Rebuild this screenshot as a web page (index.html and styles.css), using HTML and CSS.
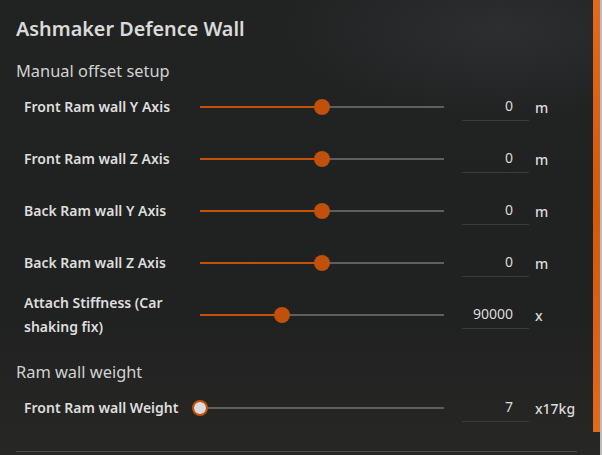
FILE: index.html
```html
<html lang="en">
<head>
    <meta charset="UTF-8">
    <title>Ashmaker Defence Wall</title>
    <link rel="stylesheet" href="styles.css">
</head>
<body>
    <div class="panel">
        <h1>Ashmaker Defence Wall</h1>

        <!-- Offsets -->
        <h2>Manual offset setup</h2>
        <div class="row">
            <div class="label">Front Ram wall Y Axis</div>
            <div class="slider"><div class="fill" style="width: 50%"></div><div class="thumb" style="left: 50%"></div></div>
            <div class="value">0</div>
            <div class="unit">m</div>
        </div>
        <div class="row">
            <div class="label">Front Ram wall Z Axis</div>
            <div class="slider"><div class="fill" style="width: 50%"></div><div class="thumb" style="left: 50%"></div></div>
            <div class="value">0</div>
            <div class="unit">m</div>
        </div>
        <div class="row">
            <div class="label">Back Ram wall Y Axis</div>
            <div class="slider"><div class="fill" style="width: 50%"></div><div class="thumb" style="left: 50%"></div></div>
            <div class="value">0</div>
            <div class="unit">m</div>
        </div>
        <div class="row">
            <div class="label">Back Ram wall Z Axis</div>
            <div class="slider"><div class="fill" style="width: 50%"></div><div class="thumb" style="left: 50%"></div></div>
            <div class="value">0</div>
            <div class="unit">m</div>
        </div>
        <div class="row">
            <div class="label">Attach Stiffness (Car shaking fix)</div>
            <div class="slider"><div class="fill" style="width: 33.6%"></div><div class="thumb" style="left: 33.6%"></div></div>
            <div class="value">90000</div>
            <div class="unit">x</div>
        </div>

        <!-- Weight -->
        <h2 class="second">Ram wall weight</h2>
        <div class="row">
            <div class="label">Front Ram wall Weight</div>
            <div class="slider"><div class="thumb empty" style="left: 0%"></div></div>
            <div class="value">7</div>
            <div class="unit">x17kg</div>
        </div>

        <div class="divider"></div>
    </div>

    <div class="scrollbar"></div>
    <div class="edge"></div>
</body>
</html>
```

FILE: styles.css
```css
/* General */
body {
    margin: 0;
    font-family: 'Noto Sans', sans-serif;
    color: #d6d6d6;
    background: radial-gradient(ellipse 220px 90px at 500px 30px, #2d2e30, rgba(45, 46, 48, 0)),
                linear-gradient(to bottom, #212222 0%, #202121 70%, #272725 100%);
    height: 455px;
    overflow: hidden;
}

.panel {
    padding: 16px 25px 0 16px;
}

h1 {
    margin: 0;
    font-size: 19.8px;
    font-weight: 600;
    line-height: 26px;
    color: #dadada;
}

h2 {
    margin: 18px 0 0 0;
    font-size: 16.4px;
    font-weight: 400;
    line-height: 21px;
    color: #d2d2d2;
}

h2.second {
    margin-top: 20px;
}

/* Rows */
.row {
    display: flex;
    align-items: center;
    height: 52px;
    padding-left: 8px;
}

.label {
    width: 176px;
    font-size: 14px;
    font-weight: 600;
    line-height: 24px;
    color: #dedede;
}

.slider {
    position: relative;
    width: 244px;
    height: 2px;
    background-color: #5f5f5f;
}

.fill {
    height: 2px;
    background-color: #c4500a;
}

.thumb {
    position: absolute;
    top: -7px;
    width: 16px;
    height: 16px;
    margin-left: -8px;
    border-radius: 50%;
    background-color: #c0500a;
}

.thumb.empty {
    box-sizing: border-box;
    border: 2px solid #c4500a;
    background-color: #dcdcdc;
}

.value {
    box-sizing: border-box;
    width: 67px;
    height: 28px;
    margin-left: 18px;
    padding: 3px 16px 0 0;
    text-align: right;
    font-size: 14px;
    border-bottom: 1px solid #3b3b3b;
    color: #dcdcdc;
}

.unit {
    margin-left: 6px;
    font-size: 14px;
    font-weight: 500;
    color: #dcdcdc;
}

.divider {
    margin-top: 17px;
    height: 1px;
    background-color: #4c4c4c;
}

/* Scrollbar */
.scrollbar {
    position: absolute;
    top: 0;
    left: 593px;
    width: 7px;
    height: 432px;
    background: linear-gradient(to bottom, #e06a1e, #d45a0a 50%, #e06a1e);
}

.edge {
    position: absolute;
    top: 0;
    left: 600px;
    width: 2px;
    height: 455px;
    background-color: #bdbdbd;
}
```
